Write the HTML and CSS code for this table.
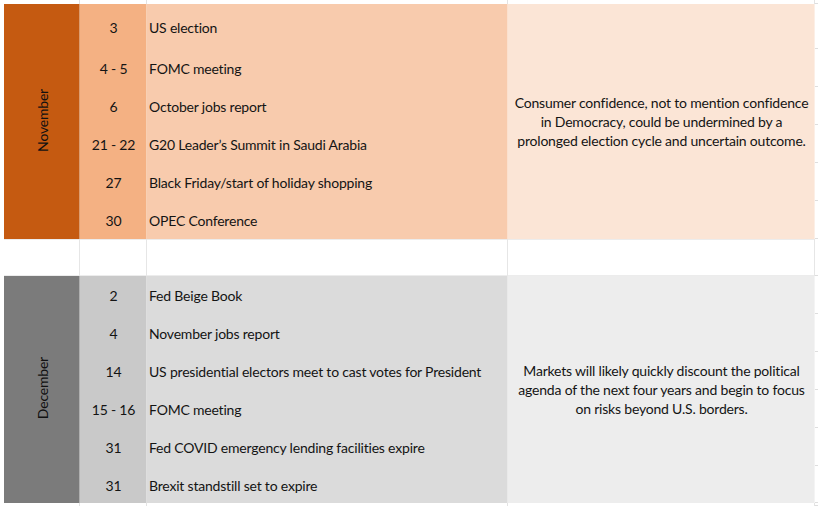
FILE: index.html
```html
<!DOCTYPE html>
<html lang="en">
<head>
<meta charset="utf-8">
<title>Calendar</title>
<link rel="stylesheet" href="styles.css">
</head>
<body>
<table class="sheet">
  <colgroup>
    <col class="c-month"><col class="c-day"><col class="c-event"><col class="c-note"><col class="c-edge">
  </colgroup>
  <tbody>
    <tr class="strip top"><td></td><td></td><td></td><td></td><td class="edge"></td></tr>

    <tr class="nov tall">
      <td class="month" rowspan="6"><span class="vlabel">November</span></td>
      <td class="day">3</td><td class="event">US election</td>
      <td class="note" rowspan="6">Consumer confidence, not to mention confidence<br>in Democracy, could be undermined by a<br>prolonged election cycle and uncertain outcome.</td>
      <td class="edge"></td>
    </tr>
    <tr class="nov row"><td class="day">4 - 5</td><td class="event">FOMC meeting</td><td class="edge"></td></tr>
    <tr class="nov row"><td class="day">6</td><td class="event">October jobs report</td><td class="edge"></td></tr>
    <tr class="nov row"><td class="day">21 - 22</td><td class="event">G20 Leader’s Summit in Saudi Arabia</td><td class="edge"></td></tr>
    <tr class="nov row"><td class="day">27</td><td class="event">Black Friday/start of holiday shopping</td><td class="edge"></td></tr>
    <tr class="nov row"><td class="day">30</td><td class="event">OPEC Conference</td><td class="edge"></td></tr>

    <tr class="gap"><td></td><td></td><td></td><td></td><td class="edge"></td></tr>

    <tr class="dec row">
      <td class="month" rowspan="6"><span class="vlabel">December</span></td>
      <td class="day">2</td><td class="event">Fed Beige Book</td>
      <td class="note" rowspan="6">Markets will likely quickly discount the political<br>agenda of the next four years and begin to focus<br>on risks beyond U.S. borders.</td>
      <td class="edge"></td>
    </tr>
    <tr class="dec row"><td class="day">4</td><td class="event">November jobs report</td><td class="edge"></td></tr>
    <tr class="dec row"><td class="day">14</td><td class="event">US presidential electors meet to cast votes for President</td><td class="edge"></td></tr>
    <tr class="dec row"><td class="day">15 - 16</td><td class="event">FOMC meeting</td><td class="edge"></td></tr>
    <tr class="dec row"><td class="day">31</td><td class="event">Fed COVID emergency lending facilities expire</td><td class="edge"></td></tr>
    <tr class="dec short"><td class="day">31</td><td class="event">Brexit standstill set to expire</td><td class="edge"></td></tr>

    <tr class="strip bottom"><td></td><td></td><td></td><td></td><td class="edge"></td></tr>
  </tbody>
</table>
</body>
</html>
```
FILE: styles.css
```css
html, body {
  margin: 0;
  padding: 0;
  background: #ffffff;
  overflow: hidden;
}

.sheet {
  margin-left: 4px;
  border-collapse: collapse;
  table-layout: fixed;
  width: 814px;
  font-family: Lato, "Liberation Sans", sans-serif;
  font-size: 14px;
  letter-spacing: -0.2px;
  color: #141414;
}

.c-month { width: 76px; }
.c-day { width: 67px; }
.c-event { width: 361px; }
.c-note { width: 307px; }
.c-edge { width: 3px; }

.sheet td {
  padding: 0;
  vertical-align: middle;
  white-space: nowrap;
  box-shadow: inset -1px 0 rgba(255, 255, 255, 0.4);
}

.strip td,
.gap td {
  background: #ffffff;
  box-shadow: inset -1px 0 #e3e3e3;
}

.gap td {
  box-shadow: inset -1px 0 #e6e6e6, inset 0 1px #ececec, inset 0 -1px #ececec;
}

.sheet td.edge {
  background: #ffffff;
  box-shadow: inset 0 -1px #dedede;
}

.top { height: 4px; }
.bottom { height: 3px; }
.tall { height: 45px; }
.row { height: 38px; }
.short { height: 37px; }
.gap { height: 37px; }

.month {
  text-align: center;
}

.vlabel {
  display: inline-block;
  writing-mode: vertical-rl;
  transform: rotate(180deg);
  font-size: 14px;
  color: #111;
}

.sheet .day {
  text-align: center;
  padding-top: 1px;
}

.sheet .event {
  padding-left: 2px;
  padding-top: 1px;
}

.note {
  text-align: center;
  line-height: 19px;
}

.nov .month { background: #c55a11; }
.nov .day { background: #f4b183; }
.nov .event { background: #f8cbad; }
.nov .note { background: #fbe5d6; }

.dec .month { background: #7b7b7b; }
.dec .day { background: #c9c9c9; }
.dec .event { background: #dbdbdb; }
.dec .note { background: #ededed; }
```
